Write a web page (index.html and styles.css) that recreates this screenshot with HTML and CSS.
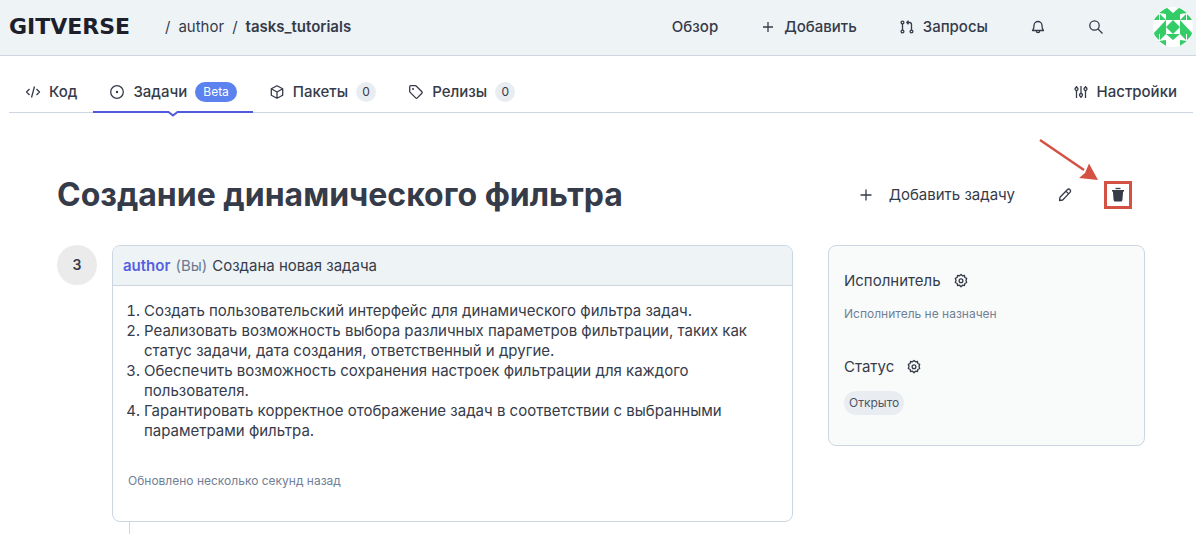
FILE: index.html
```html
<!DOCTYPE html>
<html lang="ru">
<head>
<meta charset="utf-8">
<meta name="viewport" content="width=device-width, initial-scale=1">
<title>Создание динамического фильтра</title>
<link rel="stylesheet" href="styles.css">
</head>
<body>
<header class="topbar">
  <nav class="crumbs" aria-label="Путь">
    <a class="logo" href="#">GITVERSE</a>
    <span>/</span>
    <a href="#">author</a>
    <span>/</span>
    <a class="repo" href="#">tasks_tutorials</a>
  </nav>
  <nav class="menu" aria-label="Меню">
    <a class="menu-item" href="#">Обзор</a>
    <button class="menu-item" type="button"><svg class="icon" viewBox="0 0 16 16"><path d="M8 3v10M3 8h10"/></svg>Добавить</button>
    <a class="menu-item" href="#"><svg class="icon" viewBox="0 0 16 16"><circle cx="3.500" cy="3.500" r="1.400"/><circle cx="3.500" cy="12.500" r="1.400"/><circle cx="12.500" cy="12.500" r="1.400"/><path d="M3.500 5v6M12.500 11V5.500Q12.500 3.500 10.500 3.500H8M9.500 1.800 7.800 3.500l1.700 1.700"/></svg>Запросы</a>
    <button class="menu-icon" type="button" aria-label="Уведомления"><svg class="icon" viewBox="0 0 16 16"><path d="M2.500 11.500c1.200-1 1.500-2 1.500-5a4 4 0 0 1 8 0c0 3 .3 4 1.500 5zM6.300 12a1.700 1.700 0 0 0 3.400 0"/></svg></button>
    <button class="menu-icon" type="button" aria-label="Поиск"><svg class="icon" viewBox="0 0 16 16"><circle cx="6.500" cy="6.500" r="4.700"/><path d="m10 10 4.500 4.500"/></svg></button>
    <a class="avatar" href="#" aria-label="Профиль"><svg viewBox="0 0 40 40"><path class="pix" d="M13 0l7 6 7-6v13H13zM13 13v14H0zM27 13v14h13zM20 13l7 7-7 7-7-7zM13 27h14l-7 6zM6 6l7-5v6zM0 13l6-6v6zM7 13V7l6 6zM34 6l-7-5v6zM40 13l-6-6v6zM33 13V7l-6 6zM0 27h6v6zM7 27h6l-6 6zM6 34l7 5v-6zM40 27h-6v6zM33 27h-6l6 6zM34 34l-7 5v-6z"/></svg></a>
  </nav>
</header>

<nav class="tabs" aria-label="Разделы">
  <a class="tab" href="#"><svg class="icon" viewBox="0 0 16 16"><path d="M4.500 5 1.500 8l3 3M11.500 5l3 3-3 3M9.500 2.500l-3 11"/></svg>Код</a>
  <a class="tab tab-active" href="#" aria-current="page"><svg class="icon" viewBox="0 0 16 16"><circle cx="8" cy="8" r="6.300"/><circle class="fill" cx="8" cy="8" r="1.200"/></svg>Задачи<span class="beta">Beta</span><svg class="notch" viewBox="0 0 12 6"><path class="gap" d="M1 0h10v2L6 5 1 2z"/><path d="M0 1h1.500L6 4.500 10.500 1H12"/></svg></a>
  <a class="tab" href="#"><svg class="icon" viewBox="0 0 16 16"><path d="M8 1.700 13.700 4.800v6.400L8 14.300 2.300 11.200V4.800zM2.300 4.800 8 8l5.700-3.200M8 8v6.300"/></svg>Пакеты<span class="count">0</span></a>
  <a class="tab" href="#"><svg class="icon" viewBox="0 0 16 16"><path d="M1.700 2.700q0-1 1-1h4.500q.7 0 1.200.5l5.500 5.500q.8.800 0 1.600L9.300 13.900q-.8.800-1.600 0L2.200 8.400q-.5-.5-.5-1.200z"/><circle class="fill" cx="5" cy="5" r="1"/></svg>Релизы<span class="count">0</span></a>
  <a class="tab tab-end" href="#"><svg class="icon" viewBox="0 0 16 16"><circle cx="3.500" cy="5" r="1.500"/><circle cx="8" cy="11" r="1.500"/><circle cx="12.500" cy="5" r="1.500"/><path d="M3.500 2v1.500M3.500 6.500V14M8 2v7.500M8 12.500V14M12.500 2v1.500M12.500 6.500V14"/></svg>Настройки</a>
</nav>

<main class="page">
  <div class="heading">
    <h1>Создание динамического фильтра</h1>
    <div class="actions">
      <button class="add" type="button"><svg class="icon" viewBox="0 0 16 16"><path d="M8 2.500v11M2.500 8h11"/></svg>Добавить задачу</button>
      <button class="action" type="button" aria-label="Редактировать"><svg class="icon" viewBox="0 0 16 16"><path d="M2.500 13.500 3 10.300l7.300-7.600a1.900 1.900 0 0 1 2.700 2.700L5.700 13zM9 4.200l2.700 2.700"/></svg></button>
      <button class="action marked" type="button" aria-label="Удалить"><svg class="icon" viewBox="0 0 16 16"><path class="fill" d="M2 3h12v1.600h-.9L12.400 13q-.1 1.500-1.500 1.500H5.100q-1.400 0-1.500-1.500L2.900 4.600H2z"/><path d="M5.500 1.500h5"/></svg><svg class="arrow" viewBox="0 0 60 44"><path class="shaft" d="M2 2 46 32"/><path class="head" d="m51 25.500 9 16.500-19-2 6-5z"/></svg></button>
    </div>
  </div>

  <div class="columns">
    <div class="thread">
      <div class="badge">З</div>
      <div class="thread-body">
        <article class="card">
          <header class="card-head"><a href="#">author</a><span class="muted">(Вы)</span><span>Создана новая задача</span></header>
          <div class="card-body">
            <ol>
              <li>Создать пользовательский интерфейс для динамического фильтра задач.</li>
              <li>Реализовать возможность выбора различных параметров фильтрации, таких как статус задачи, дата создания, ответственный и другие.</li>
              <li>Обеспечить возможность сохранения настроек фильтрации для каждого пользователя.</li>
              <li>Гарантировать корректное отображение задач в соответствии с выбранными параметрами фильтра.</li>
            </ol>
            <p class="small">Обновлено несколько секунд назад</p>
          </div>
        </article>
        <div class="line"></div>
      </div>
    </div>
    <aside class="side">
      <section>
        <h2>Исполнитель<button class="gear" type="button" aria-label="Изменить исполнителя"><svg class="icon" viewBox="0 0 16 16"><path d="M6.500 2.800 8 1.500l1.500 1.300 2-.3.300 2 1.900.9L13 7.500l.7 2-1.900 1-.3 2-2-.3L8 13.800l-1.500-1.600-2 .3-.3-2-1.900-1 .7-2-.7-2.100 1.900-.9.300-2z"/><circle cx="8" cy="7.700" r="1.900"/></svg></button></h2>
        <p class="small">Исполнитель не назначен</p>
      </section>
      <section>
        <h2>Статус<button class="gear" type="button" aria-label="Изменить статус"><svg class="icon" viewBox="0 0 16 16"><path d="M6.500 2.800 8 1.500l1.500 1.300 2-.3.300 2 1.900.9L13 7.500l.7 2-1.900 1-.3 2-2-.3L8 13.800l-1.500-1.600-2 .3-.3-2-1.900-1 .7-2-.7-2.100 1.900-.9.300-2z"/><circle cx="8" cy="7.700" r="1.900"/></svg></button></h2>
        <span class="status">Открыто</span>
      </section>
    </aside>
  </div>
</main>
</body>
</html>
```

FILE: styles.css
```css
* { box-sizing: border-box; }

body {
  margin: 0;
  background: #fff;
  color: #363b4a;
  font: 15px/20px Inter, sans-serif;
}

a { color: inherit; text-decoration: none; }
button { padding: 0; border: 0; background: none; color: inherit; font: inherit; cursor: pointer; }
h1, h2, p, ol { margin: 0; }

.icon {
  flex: none;
  display: block;
  width: 16px;
  height: 16px;
  fill: none;
  stroke: currentColor;
  stroke-width: 1.3;
  stroke-linejoin: round;
}
.icon .fill { fill: currentColor; stroke: none; }

.topbar {
  display: flex;
  align-items: center;
  justify-content: space-between;
  height: 56px;
  padding: 0 3px 1px 9px;
  background: #eef3f6;
  border-bottom: 1px solid #cfd6df;
}
.crumbs { display: flex; align-items: center; gap: 8px; }
.logo {
  width: 148px;
  color: #1d202b;
  font: bold 22px/20px "DejaVu Sans", sans-serif;
}
.repo { font-weight: 600; }
.menu { display: flex; align-items: center; font-weight: 500; }
.menu-item { display: flex; align-items: center; gap: 8px; margin-right: 42px; }
.menu-icon { margin-right: 42px; }
.avatar { width: 40px; height: 40px; margin-left: 7px; border-radius: 50%; background: #fff; overflow: hidden; }
.avatar svg { display: block; }
.pix { fill: #33cc66; }

.tabs {
  display: flex;
  margin: 14px 3px 0 9px;
  border-bottom: 1px solid #ccd6e0;
  font-weight: 500;
}
.tab {
  position: relative;
  display: flex;
  align-items: center;
  gap: 8px;
  height: 43px;
  margin-bottom: -1px;
  padding: 0 16px;
}
.tab-active { box-shadow: inset 0 -2px #4f5bdc; }
.tab-end { margin-left: auto; }
.notch {
  position: absolute;
  left: 50%;
  bottom: -4px;
  width: 12px;
  height: 6px;
  margin-left: -6px;
  fill: none;
  stroke: #4f5bdc;
  stroke-width: 2;
}
.notch .gap { fill: #fff; stroke: none; }
.beta, .count { height: 20px; border-radius: 10px; font-size: 12px; font-weight: 400; text-align: center; }
.beta { padding: 0 8px; background: #5b82ee; color: #fff; }
.count { width: 20px; background: #e9edf1; }

.page { padding: 62px 51px 0 57px; }
.heading { display: flex; align-items: center; justify-content: space-between; }
h1 { font-size: 32px; line-height: 40px; font-weight: 700; }
.actions { display: flex; align-items: center; padding-right: 13px; }
.add { display: flex; align-items: center; gap: 15px; margin-right: 36px; }
.action { position: relative; display: grid; place-items: center; width: 28px; height: 28px; }
.marked { margin-left: 25px; border: 3px solid #d35244; }
.arrow { position: absolute; right: 31px; bottom: 24px; width: 60px; height: 44px; overflow: visible; }
.shaft { fill: none; stroke: #d35244; stroke-width: 2.5; }
.head { fill: #d35244; }

.columns { display: grid; grid-template-columns: minmax(0, 1fr) 317px; gap: 35px; align-items: start; margin-top: 30px; }
.thread { display: flex; gap: 15px; }
.badge {
  flex: none;
  width: 40px;
  height: 40px;
  border-radius: 50%;
  background: #ebebeb;
  font-size: 14px;
  line-height: 40px;
  font-weight: 600;
  text-align: center;
}
.thread-body { flex: 1; }
.card { border: 1px solid #ccd6e0; border-radius: 8px; overflow: hidden; }
.card-head { display: flex; gap: 5px; padding: 10px; background: #eef3f6; border-bottom: 1px solid #ccd6e0; line-height: 19px; }
.card-head a { color: #5560e0; font-weight: 600; }
.muted { color: #6b7a90; }
.card-body { padding: 15px 15px 31px; }
ol { padding-left: 16px; }
.small { color: #718096; font-size: 12px; line-height: 18px; }
.card-body .small { margin-top: 31px; }
.line { height: 12px; margin-left: 17px; border-left: 1px solid #ccd6e0; }

.side {
  display: grid;
  gap: 34px;
  padding: 25px 15px 30px;
  background: #f9fbfb;
  border: 1px solid #ccd6e0;
  border-radius: 8px;
}
h2 { display: flex; align-items: center; gap: 12px; margin-bottom: 14px; font-size: 15px; line-height: 20px; font-weight: 400; }
.status { display: block; width: fit-content; padding: 0 5px; border-radius: 12px; background: #e9edf1; color: #4d5566; font-size: 12px; line-height: 24px; }
```
